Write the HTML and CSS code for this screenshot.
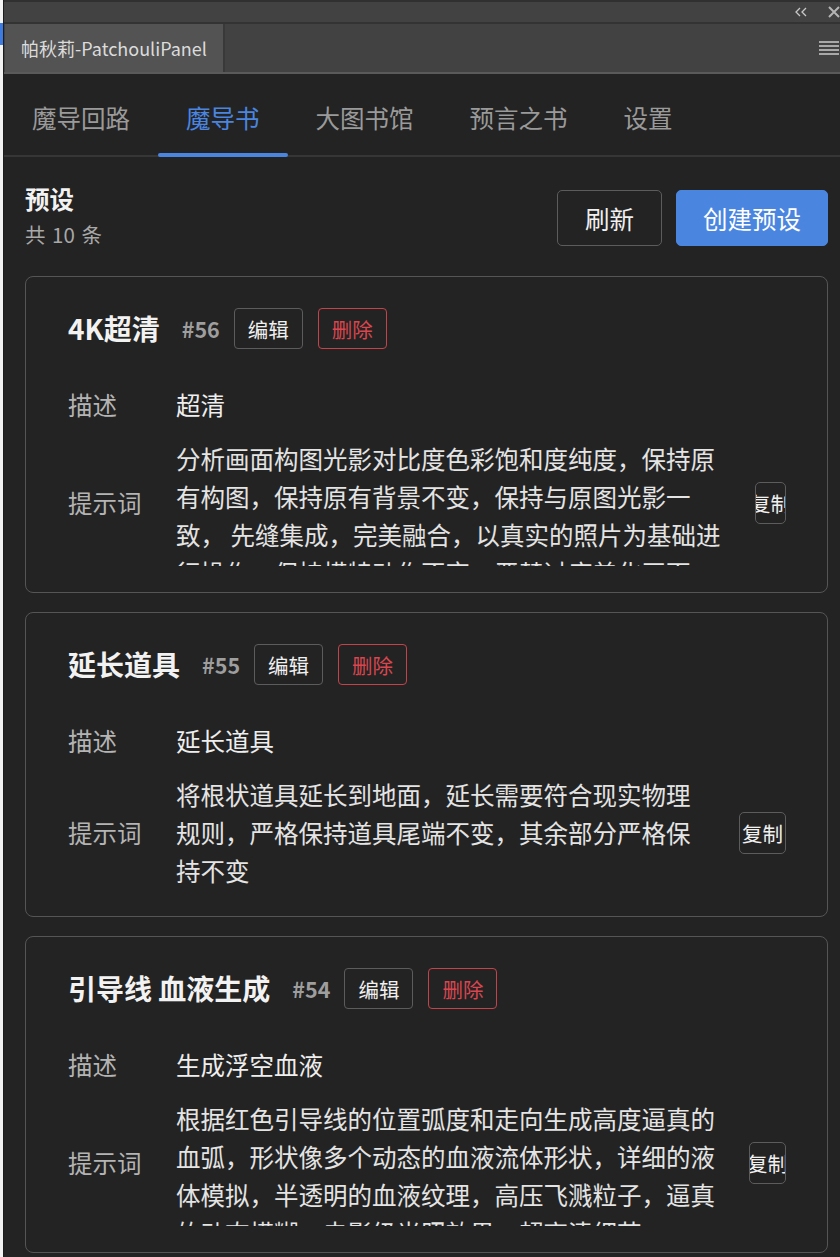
FILE: index.html
```html
<!DOCTYPE html>
<html lang="zh-CN">
<head>
  <meta charset="UTF-8">
  <meta name="viewport" content="width=device-width, initial-scale=1.0">
  <title>帕秋莉-PatchouliPanel</title>
  <link rel="stylesheet" href="styles.css">
</head>
<body>
  <div class="desk">
    <div class="desk-edge">
      <span class="desk-app"></span>
    </div>

    <div class="panel">
      <div class="titlebar">
        <svg class="tb-collapse" width="13" height="10" viewBox="0 0 13 10">
          <path d="M6 1 L2 5 L6 9 M12 1 L8 5 L12 9" fill="none" stroke="#c8c8c8" stroke-width="1.3"/>
        </svg>
        <svg class="tb-close" width="12" height="12" viewBox="0 0 12 12">
          <path d="M1 1 L11 11 M11 1 L1 11" fill="none" stroke="#b4b4b4" stroke-width="2"/>
        </svg>
      </div>

      <div class="panel-tabs">
        <div class="panel-tab">帕秋莉-PatchouliPanel</div>
        <div class="panel-menu">
          <span></span><span></span><span></span><span></span>
        </div>
      </div>

      <div class="main">
        <nav class="tabs">
          <a class="tab">魔导回路</a>
          <a class="tab active">魔导书</a>
          <a class="tab">大图书馆</a>
          <a class="tab">预言之书</a>
          <a class="tab">设置</a>
        </nav>

        <div class="page">
          <div class="page-header">
            <div class="page-title">
              <h2>预设</h2>
              <div class="count">共 10 条</div>
            </div>
            <div class="header-actions">
              <button class="btn">刷新</button>
              <button class="btn btn-primary">创建预设</button>
            </div>
          </div>

          <div class="preset-list">
            <div class="preset-card">
              <div class="preset-head">
                <h3>4K超清</h3>
                <span class="preset-id">#56</span>
                <button class="btn-sm">编辑</button>
                <button class="btn-sm btn-danger">删除</button>
              </div>
              <div class="preset-row">
                <span class="preset-label">描述</span>
                <span class="preset-desc">超清</span>
              </div>
              <div class="preset-row">
                <span class="preset-label">提示词</span>
                <div class="preset-prompt">分析画面构图光影对比度色彩饱和度纯度，保持原有构图，保持原有背景不变，保持与原图光影一致， 先缝集成，完美融合，以真实的照片为基础进行操作，保持模特动作不变，严禁过度美化画面，保持原有的光影氛围和质感细节。</div>
                <button class="btn-copy copy-sm">复制</button>
              </div>
            </div>

            <div class="preset-card">
              <div class="preset-head">
                <h3>延长道具</h3>
                <span class="preset-id">#55</span>
                <button class="btn-sm">编辑</button>
                <button class="btn-sm btn-danger">删除</button>
              </div>
              <div class="preset-row">
                <span class="preset-label">描述</span>
                <span class="preset-desc">延长道具</span>
              </div>
              <div class="preset-row">
                <span class="preset-label">提示词</span>
                <div class="preset-prompt">将根状道具延长到地面，延长需要符合现实物理规则，严格保持道具尾端不变，其余部分严格保持不变</div>
                <button class="btn-copy copy-lg">复制</button>
              </div>
            </div>

            <div class="preset-card">
              <div class="preset-head">
                <h3>引导线 血液生成</h3>
                <span class="preset-id">#54</span>
                <button class="btn-sm">编辑</button>
                <button class="btn-sm btn-danger">删除</button>
              </div>
              <div class="preset-row">
                <span class="preset-label">描述</span>
                <span class="preset-desc">生成浮空血液</span>
              </div>
              <div class="preset-row">
                <span class="preset-label">提示词</span>
                <div class="preset-prompt">根据红色引导线的位置弧度和走向生成高度逼真的血弧，形状像多个动态的血液流体形状，详细的液体模拟，半透明的血液纹理，高压飞溅粒子，逼真的动态模糊，电影级光照效果，超高清细节。</div>
                <button class="btn-copy copy-md">复制</button>
              </div>
            </div>
          </div>
        </div>
      </div>
    </div>
  </div>
</body>
</html>
```

FILE: styles.css
```css
body {
  margin: 0;
  height: 1257px;
  overflow: hidden;
  background: #ececec;
  font-family: "Noto Sans CJK SC", "Noto Sans", sans-serif;
  color: #e8e8e8;
}
button {
  font-family: inherit;
  cursor: pointer;
}
.desk {
  display: flex;
  height: 1257px;
}
.desk-edge {
  width: 3px;
  flex: none;
  padding-top: 23px;
  background: #f2f2f2;
}
.desk-app {
  display: block;
  height: 22px;
  background: #3d7be0;
}
.panel {
  flex: 1;
  min-width: 0;
  display: flex;
  flex-direction: column;
  border-left: 1px solid #1c1c1c;
  background: #232323;
}

/* host window chrome */
.titlebar {
  height: 20px;
  flex: none;
  display: flex;
  align-items: center;
  justify-content: flex-end;
  background: #424242;
  border-top: 2px solid #303030;
  border-bottom: 2px solid #333;
}
.tb-collapse {
  margin-right: 21px;
}
.panel-tabs {
  height: 48px;
  flex: none;
  display: flex;
  background: #424242;
  border-bottom: 2px solid #5a5a5a;
}
.panel-tab {
  margin-left: 1px;
  width: 202px;
  padding-left: 16px;
  display: flex;
  align-items: center;
  background: #535353;
  border-right: 2px solid #393939;
  font-size: 18px;
  color: #dcdcdc;
}
.panel-menu {
  margin-left: auto;
  margin-right: 1px;
  width: 20px;
  display: flex;
  flex-direction: column;
  justify-content: center;
  gap: 2px;
}
.panel-menu span {
  height: 2px;
  background: #a8a8a8;
}

/* main tabs */
.tabs {
  display: flex;
  border-bottom: 2px solid #363636;
}
.tab {
  position: relative;
  padding: 25px 28px 19px;
  font-size: 24.5px;
  line-height: 37px;
  color: #9a9a9a;
}
.tab.active {
  color: #4a86e0;
}
.tab.active::after {
  content: "";
  position: absolute;
  left: 0;
  right: 0;
  bottom: -2px;
  height: 4px;
  border-radius: 2px;
  background: #4a86e0;
}

.page {
  padding: 25px 12px 0 21px;
}
.page-header {
  display: flex;
  align-items: flex-start;
  justify-content: space-between;
}
.page-title h2 {
  margin: 0;
  font-size: 24.5px;
  line-height: 34px;
  font-weight: bold;
  color: #f2f2f2;
}
.count {
  margin-top: 4px;
  font-size: 20.5px;
  line-height: 29px;
  word-spacing: 2px;
  color: #a8a8a8;
}
.header-actions {
  margin-top: 8px;
  display: flex;
  gap: 14px;
}
.btn {
  height: 56px;
  padding: 0 27px;
  border: 1px solid #5c5c5c;
  border-radius: 5px;
  background: transparent;
  color: #f0f0f0;
  font-size: 24.5px;
}
.btn-primary {
  padding: 0 26px;
  border-color: #4a86e0;
  background: #4a86e0;
  color: #fff;
}

/* preset cards */
.preset-list {
  margin-top: 27px;
}
.preset-card {
  margin-bottom: 19px;
  padding: 31px 41px 26px 42px;
  border: 1px solid #555;
  border-radius: 8px;
}
.preset-head {
  display: flex;
  align-items: center;
  gap: 14px;
  margin-bottom: 37px;
}
.preset-head h3 {
  margin: 0 8px 0 0;
  font-size: 28px;
  line-height: 41px;
  font-weight: bold;
  color: #f2f2f2;
}
.preset-id {
  font-size: 21.5px;
  font-weight: bold;
  color: #9e9e9e;
}
.btn-sm {
  height: 41px;
  padding: 0 13px;
  border: 1px solid #5c5c5c;
  border-radius: 4px;
  background: transparent;
  color: #f0f0f0;
  font-size: 20.5px;
}
.btn-sm + .btn-sm {
  margin-left: 1px;
}
.btn-danger {
  border-color: #c4434b;
  color: #d9464f;
}
.preset-row {
  display: flex;
  align-items: center;
}
.preset-row + .preset-row {
  margin-top: 16px;
}
.preset-label {
  width: 108px;
  flex: none;
  font-size: 24.5px;
  line-height: 38px;
  color: #b4b4b4;
}
.preset-desc {
  font-size: 24.5px;
  line-height: 38px;
  color: #eeeeee;
}
.preset-prompt {
  flex: 1;
  min-width: 0;
  max-height: 126px;
  overflow: hidden;
  margin-right: 28px;
  font-size: 24.5px;
  line-height: 38px;
  color: #e4e4e4;
}
.btn-copy {
  flex: none;
  height: 42px;
  padding: 0;
  display: flex;
  align-items: center;
  justify-content: center;
  overflow: hidden;
  white-space: nowrap;
  border: 1px solid #5c5c5c;
  border-radius: 5px;
  background: transparent;
  color: #f0f0f0;
  font-size: 20.5px;
}
.copy-sm {
  width: 31px;
}
.copy-md {
  width: 37px;
}
.copy-lg {
  width: 47px;
}
```
